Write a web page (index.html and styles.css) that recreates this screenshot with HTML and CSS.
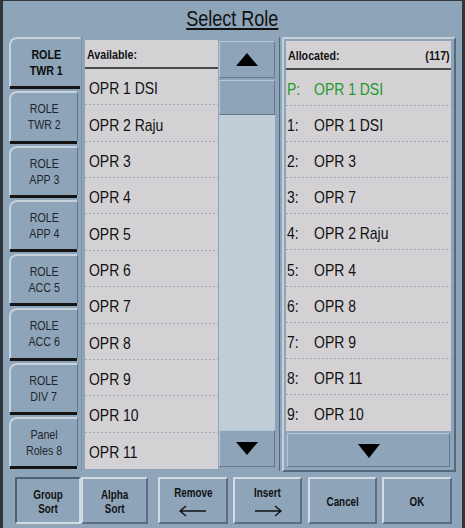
FILE: index.html
```html
<!DOCTYPE html>
<html>
<head>
<meta charset="utf-8">
<link rel="stylesheet" href="styles.css">
</head>
<body>
<div class="win">
  <h1 class="title"><span class="t c">Select Role</span></h1>
  <div class="main">
    <div class="tabs">
      <div class="tab sel"><div class="tab-b"><span class="t c">ROLE<br>TWR 1</span></div><div class="tab-line"></div></div>
      <div class="tab"><div class="tab-b"><span class="t c">ROLE<br>TWR 2</span></div><div class="tab-line"></div></div>
      <div class="tab"><div class="tab-b"><span class="t c">ROLE<br>APP 3</span></div><div class="tab-line"></div></div>
      <div class="tab"><div class="tab-b"><span class="t c">ROLE<br>APP 4</span></div><div class="tab-line"></div></div>
      <div class="tab"><div class="tab-b"><span class="t c">ROLE<br>ACC 5</span></div><div class="tab-line"></div></div>
      <div class="tab"><div class="tab-b"><span class="t c">ROLE<br>ACC 6</span></div><div class="tab-line"></div></div>
      <div class="tab"><div class="tab-b"><span class="t c">ROLE<br>DIV 7</span></div><div class="tab-line"></div></div>
      <div class="tab"><div class="tab-b"><span class="t c">Panel<br>Roles 8</span></div><div class="tab-line"></div></div>
    </div>
    <div class="avail">
      <div class="list">
        <div class="hdr"><span class="t">Available:</span></div>
        <div class="row"><span class="t">OPR 1 DSI</span></div>
        <div class="row"><span class="t">OPR 2 Raju</span></div>
        <div class="row"><span class="t">OPR 3</span></div>
        <div class="row"><span class="t">OPR 4</span></div>
        <div class="row"><span class="t">OPR 5</span></div>
        <div class="row"><span class="t">OPR 6</span></div>
        <div class="row"><span class="t">OPR 7</span></div>
        <div class="row"><span class="t">OPR 8</span></div>
        <div class="row"><span class="t">OPR 9</span></div>
        <div class="row"><span class="t">OPR 10</span></div>
        <div class="row last"><span class="t">OPR 11</span></div>
      </div>
      <div class="scroll">
        <div class="sbtn up"><svg width="22" height="13" viewBox="0 0 22 13"><polygon points="0,13 11,0 22,13" fill="#000"/></svg></div>
        <div class="thumb"></div>
        <div class="track"></div>
        <div class="sbtn down"><svg width="22" height="13" viewBox="0 0 22 13"><polygon points="0,0 22,0 11,13" fill="#000"/></svg></div>
      </div>
    </div>
    <div class="alloc">
      <div class="list">
        <div class="hdr"><span class="t">Allocated:</span><span class="t r">(117)</span></div>
        <div class="row prim"><span class="t"><span class="num">P:</span>OPR 1 DSI</span></div>
        <div class="row"><span class="t"><span class="num">1:</span>OPR 1 DSI</span></div>
        <div class="row"><span class="t"><span class="num">2:</span>OPR 3</span></div>
        <div class="row"><span class="t"><span class="num">3:</span>OPR 7</span></div>
        <div class="row"><span class="t"><span class="num">4:</span>OPR 2 Raju</span></div>
        <div class="row"><span class="t"><span class="num">5:</span>OPR 4</span></div>
        <div class="row"><span class="t"><span class="num">6:</span>OPR 8</span></div>
        <div class="row"><span class="t"><span class="num">7:</span>OPR 9</span></div>
        <div class="row"><span class="t"><span class="num">8:</span>OPR 11</span></div>
        <div class="row last"><span class="t"><span class="num">9:</span>OPR 10</span></div>
      </div>
      <div class="sbtn down wide"><svg width="22" height="14" viewBox="0 0 22 14"><polygon points="0,0 22,0 11,14" fill="#000"/></svg></div>
    </div>
  </div>
  <div class="btns">
    <div class="btn pressed b1"><span class="t c">Group<br>Sort</span></div>
    <div class="btn b2"><span class="t c">Alpha<br>Sort</span></div>
    <div class="btn b3"><span class="t c">Remove</span><svg width="28" height="12" viewBox="0 0 28 12"><path d="M1 6H27M7 1L1 6L7 11" stroke="#111" stroke-width="1.4" fill="none"/></svg></div>
    <div class="btn b4"><span class="t c">Insert</span><svg width="28" height="12" viewBox="0 0 28 12"><path d="M1 6H27M21 1L27 6L21 11" stroke="#111" stroke-width="1.4" fill="none"/></svg></div>
    <div class="btn b5"><span class="t c">Cancel</span></div>
    <div class="btn b6"><span class="t c">OK</span></div>
  </div>
</div>
</body>
</html>
```
FILE: styles.css
```css
html, body {
  margin: 0;
  padding: 0;
  background: #8ea4b8;
}
body {
  font-family: "Liberation Sans", Arial, sans-serif;
  color: #111;
}
.t {
  display: inline-block;
  transform: scaleX(0.82);
  transform-origin: left center;
  white-space: nowrap;
}
.t.c {
  transform-origin: center center;
}
.t.r {
  transform-origin: right center;
}
.win {
  width: 465px;
  height: 528px;
  box-sizing: border-box;
  background: #8ea4b8;
  border-style: solid;
  border-color: #2f353b;
  border-width: 1px 3px 0 3px;
  display: flex;
  flex-direction: column;
}
.title {
  margin: 0;
  height: 36px;
  box-sizing: border-box;
  padding-top: 7px;
  font-size: 22px;
  line-height: 22px;
  font-weight: normal;
  text-align: center;
}
.title .t {
  text-decoration: underline;
  text-decoration-thickness: 2px;
  text-underline-offset: 2px;
}
.main {
  display: flex;
  height: 435px;
  padding-left: 6px;
}
.tabs {
  width: 72px;
  display: grid;
  grid-template-rows: repeat(8, 1fr);
  height: 434px;
}
.tab {
  display: flex;
  flex-direction: column;
  padding-bottom: 2px;
  margin-right: 3px;
}
.tab.sel {
  margin-right: 0;
}
.tab-b {
  flex: 1;
  display: flex;
  align-items: center;
  justify-content: center;
  text-align: center;
  font-size: 13px;
  line-height: 16px;
  color: #1e252c;
  border-top: 2px solid #c6d2dc;
  border-left: 2px solid #c6d2dc;
  border-right: 1px solid #60758a;
  border-top-left-radius: 8px;
  border-top-right-radius: 2px;
  padding-top: 1px;
}
.tab.sel .tab-b {
  font-weight: bold;
  color: #0d0d0d;
  border-right: none;
}
.tab-line {
  height: 3px;
  background: #141414;
  margin: 0 1px 0 1px;
}
.avail {
  width: 199px;
  height: 434px;
  box-sizing: border-box;
  display: flex;
  padding: 3px 4px 2px 3px;
  border-right: 1px solid #56697a;
  border-left: 1px solid #7d93a7;
}
.list {
  background: #d4d1d5;
  display: flex;
  flex-direction: column;
}
.avail .list {
  width: 134px;
}
.hdr {
  height: 29px;
  box-sizing: border-box;
  border-bottom: 2px solid #4b4b4d;
  display: flex;
  align-items: center;
  justify-content: space-between;
  padding: 1px 1px 0 2px;
  font-size: 13px;
  font-weight: bold;
}
.row {
  flex: 1;
  display: flex;
  align-items: center;
  padding: 4px 0 0 4px;
  font-size: 17px;
  background-image: linear-gradient(to right, #a8a8b0 50%, transparent 50%);
  background-size: 4px 1px;
  background-repeat: repeat-x;
  background-position: left bottom;
}
.row.last {
  background-image: none;
}
.scroll {
  width: 56px;
  margin-left: 1px;
  display: flex;
  flex-direction: column;
}
.sbtn {
  height: 37px;
  box-sizing: border-box;
  background: #8ea5b9;
  border: 1px solid;
  border-color: #b9c8d4 #65798c #65798c #b9c8d4;
  display: flex;
  align-items: center;
  justify-content: center;
}
.sbtn.up {
  margin-top: 1px;
}
.thumb {
  height: 35px;
  margin-top: 2px;
  box-sizing: border-box;
  background: #8ea5b9;
  border: 1px solid;
  border-color: #b9c8d4 #65798c #65798c #b9c8d4;
}
.track {
  flex: 1;
  background: #c2ced7;
}
.scroll .sbtn.down {
  margin-bottom: 2px;
}
.alloc {
  margin-left: 2px;
  width: 174px;
  height: 435px;
  box-sizing: border-box;
  border: 2px solid;
  border-color: #c4d1db #55697b #55697b #c4d1db;
  padding: 2px 3px 3px 2px;
  display: flex;
  flex-direction: column;
}
.alloc .list {
  height: 390px;
}
.alloc .row {
  padding-left: 1px;
}
.num {
  display: inline-block;
  width: 33px;
}
.row.prim {
  color: #1f9a2a;
}
.sbtn.wide {
  margin: 2px 1px 0 1px;
  height: 34px;
  padding-top: 1px;
}
.btns {
  display: flex;
  margin-top: 5px;
  padding-left: 12px;
  height: 47px;
}
.btn {
  box-sizing: border-box;
  height: 47px;
  border: 2px solid;
  border-color: #d0dbe4 #5b6f82 #5b6f82 #d0dbe4;
  display: flex;
  flex-direction: column;
  align-items: center;
  justify-content: center;
  text-align: center;
  font-size: 12px;
  line-height: 14px;
  font-weight: bold;
  padding-top: 2px;
}
.btn svg {
  margin-top: 5px;
}
.btn.pressed {
  border-color: #4f6374 #d0dbe4 #d0dbe4 #4f6374;
}
.b1 { width: 66px; }
.b2 { width: 67px; }
.b3 { width: 70px; margin-left: 10px; }
.b4 { width: 69px; margin-left: 5px; }
.b5 { width: 69px; margin-left: 6px; }
.b6 { width: 70px; margin-left: 5px; }
```
